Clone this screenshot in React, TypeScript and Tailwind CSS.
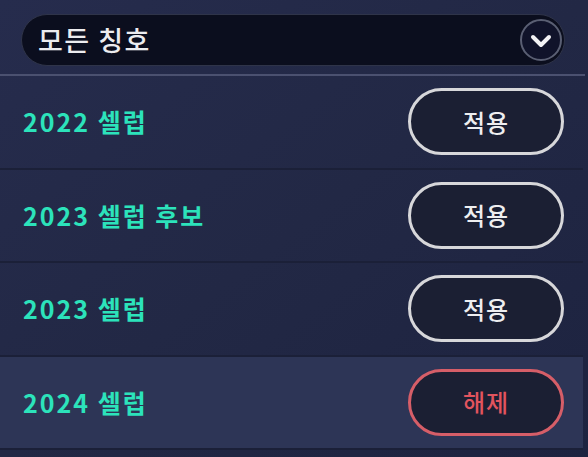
import React from "react";

type Title = { name: string; active?: boolean };

const titles: Title[] = [
  { name: "2022 셀럽" },
  { name: "2023 셀럽 후보" },
  { name: "2023 셀럽" },
  { name: "2024 셀럽", active: true },
];

const FONT = { fontFamily: '"Noto Sans CJK KR", "Noto Sans", sans-serif' };

const Chevron = () => (
  <svg width="22" height="14" viewBox="0 0 22 14" fill="none">
    <path d="M3 3 L11 11 L19 3" stroke="#f2f2f4" strokeWidth="4" strokeLinecap="round" strokeLinejoin="round" />
  </svg>
);

const App = () => {
  return (
    <div
      className="w-[588px] h-[457px] overflow-hidden bg-gradient-to-br from-[#262c4d] via-[#222845] to-[#1d2340]"
      style={FONT}
    >
      {/* filter dropdown */}
      <div className="pl-[21px] pr-[22px] pt-[14px] pb-[8px] w-[587px]">
        <div className="h-[52px] rounded-full bg-[#0b0e1e] border border-[#2f3449] flex items-center justify-between pl-[16px] pr-[2px]">
          <span className="text-[27px] font-medium text-[#ececef] tracking-[1.5px]">모든 칭호</span>
          <div className="w-[42px] h-[42px] rounded-full border-2 border-[#5a5f73] bg-[#10132a] flex items-center justify-center pt-[2px]">
            <Chevron />
          </div>
        </div>
      </div>
      <div className="h-[2px] w-[585px] bg-[#4b5170]" />

      {/* title list */}
      <div className="w-[583px] flex flex-col">
        {titles.map((t) => (
          <div
            key={t.name}
            className={
              "h-[93.5px] flex items-center justify-between pl-[23px] pr-[19px] border-b-2 " +
              (t.active ? "bg-[#2d3556] border-[#1b2038]" : "border-[#1b2038]")
            }
          >
            <span className="text-[25px] font-bold text-[#2ce3bb] tracking-[2px]">{t.name}</span>
            <button
              className={
                "w-[156px] h-[67px] rounded-full border-[3px] bg-[#1b1f33] flex items-center justify-center text-[24px] font-medium tracking-[1px] " +
                (t.active ? "border-[#d65e68] text-[#e2545e]" : "border-[#d7d7da] text-[#eeeef0]")
              }
            >
              {t.active ? "해제" : "적용"}
            </button>
          </div>
        ))}
      </div>
    </div>
  );
};

export default App;
